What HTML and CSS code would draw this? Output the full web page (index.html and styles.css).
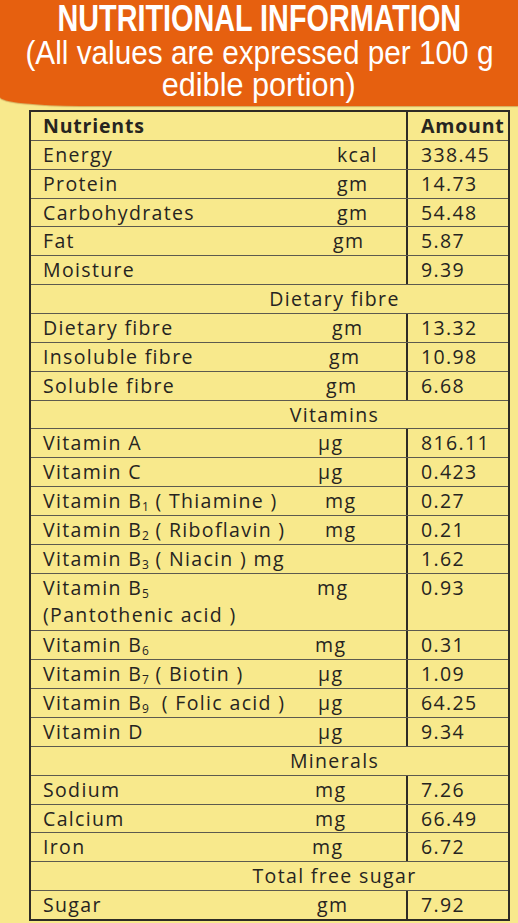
FILE: index.html
```html
<!DOCTYPE html>
<html>
<head>
<meta charset="utf-8">
<link rel="stylesheet" href="styles.css">
</head>
<body>
<header class="banner">
  <div class="line l1"><span>NUTRITIONAL INFORMATION</span></div>
  <div class="line l2"><span>(All values are expressed per 100 g</span></div>
  <div class="line l3"><span>edible portion)</span></div>
</header>
<main class="wrap">
  <div class="nt">
    <div class="row head"><div class="name b">Nutrients</div><div class="unit"></div><div class="amt b">Amount</div></div>
    <div class="row"><div class="name">Energy</div><div class="unit p23">kcal</div><div class="amt">338.45</div></div>
    <div class="row"><div class="name">Protein</div><div class="unit p23">gm</div><div class="amt">14.73</div></div>
    <div class="row"><div class="name">Carbohydrates</div><div class="unit p23">gm</div><div class="amt">54.48</div></div>
    <div class="row"><div class="name">Fat</div><div class="unit p19">gm</div><div class="amt">5.87</div></div>
    <div class="row"><div class="name">Moisture</div><div class="unit"></div><div class="amt">9.39</div></div>
    <div class="row sec"><div class="title">Dietary fibre</div></div>
    <div class="row"><div class="name">Dietary fibre</div><div class="unit p18">gm</div><div class="amt">13.32</div></div>
    <div class="row"><div class="name">Insoluble fibre</div><div class="unit p15">gm</div><div class="amt">10.98</div></div>
    <div class="row"><div class="name">Soluble fibre</div><div class="unit p12">gm</div><div class="amt">6.68</div></div>
    <div class="row sec"><div class="title">Vitamins</div></div>
    <div class="row"><div class="name">Vitamin A</div><div class="unit p4">µg</div><div class="amt">816.11</div></div>
    <div class="row"><div class="name">Vitamin C</div><div class="unit p4">µg</div><div class="amt">0.423</div></div>
    <div class="row"><div class="name">Vitamin B<sub>1</sub> ( Thiamine )</div><div class="unit p11">mg</div><div class="amt">0.27</div></div>
    <div class="row"><div class="name">Vitamin B<sub>2</sub> ( Riboflavin )</div><div class="unit p11">mg</div><div class="amt">0.21</div></div>
    <div class="row"><div class="name wide">Vitamin B<sub>3</sub> ( Niacin ) mg</div><div class="amt">1.62</div></div>
    <div class="row dbl"><div class="name">Vitamin B<sub>5</sub><br>(Pantothenic acid )</div><div class="unit p3">mg</div><div class="amt">0.93</div></div>
    <div class="row"><div class="name">Vitamin B<sub>6</sub></div><div class="unit p1">mg</div><div class="amt">0.31</div></div>
    <div class="row"><div class="name">Vitamin B<sub>7</sub> ( Biotin )</div><div class="unit p4">µg</div><div class="amt">1.09</div></div>
    <div class="row"><div class="name">Vitamin B<sub>9</sub> &nbsp;( Folic acid )</div><div class="unit p4">µg</div><div class="amt">64.25</div></div>
    <div class="row"><div class="name">Vitamin D</div><div class="unit p4">µg</div><div class="amt">9.34</div></div>
    <div class="row sec"><div class="title">Minerals</div></div>
    <div class="row"><div class="name">Sodium</div><div class="unit p1">mg</div><div class="amt">7.26</div></div>
    <div class="row"><div class="name">Calcium</div><div class="unit p1">mg</div><div class="amt">66.49</div></div>
    <div class="row"><div class="name">Iron</div><div class="unit">mg</div><div class="amt">6.72</div></div>
    <div class="row sec"><div class="title">Total free sugar</div></div>
    <div class="row"><div class="name">Sugar</div><div class="unit p3">gm</div><div class="amt">7.92</div></div>
  </div>
</main>
</body>
</html>
```

FILE: styles.css
```css
html, body {
  margin: 0;
  padding: 0;
  background: #f8e98c;
}

body {
  width: 518px;
  height: 923px;
  overflow: hidden;
}

.banner {
  background: #e6600f;
  color: #fff;
  font-family: "Liberation Sans", Arial, sans-serif;
  padding-top: 1px;
  height: 106px;
  box-sizing: border-box;
  border-bottom-left-radius: 80px 9px;
  box-shadow: 0 1px 1px rgba(150, 60, 0, 0.35);
}

.line {
  display: flex;
  justify-content: center;
  white-space: nowrap;
}

.line span {
  display: inline-block;
}

.l1 {
  font-weight: bold;
  font-size: 36px;
  line-height: 35px;
}

.l1 span {
  transform: scaleX(0.8);
}

.l2 {
  font-size: 34px;
  line-height: 33px;
}

.l2 span {
  transform: scaleX(0.875);
}

.l3 {
  font-size: 34px;
  line-height: 30px;
}

.l3 span {
  transform: scaleX(0.9);
}

.wrap {
  padding: 4px 0 0 29px;
}

.nt {
  width: 477px;
  border: 2px solid #2e2b25;
  font-family: "Open Sans", "DejaVu Sans", sans-serif;
  font-size: 19.5px;
  letter-spacing: 1.35px;
  color: #26241f;
}

.row {
  display: grid;
  grid-template-columns: 281px 94px 1fr;
  height: 28.86px;
  box-sizing: border-box;
  border-top: 1px solid #5d5a4e;
  line-height: 27px;
}

.row:first-child {
  border-top: none;
  height: 27.86px;
}

.row.dbl {
  height: 57.72px;
}

.name {
  padding-left: 12px;
  white-space: nowrap;
}

.name.wide {
  grid-column: 1 / 3;
}

.unit {
  white-space: nowrap;
}

.p1 { padding-left: 3px; }
.p3 { padding-left: 5px; }
.p4 { padding-left: 6px; }
.p11 { padding-left: 13px; }
.p12 { padding-left: 14px; }
.p15 { padding-left: 17px; }
.p18 { padding-left: 20px; }
.p19 { padding-left: 21px; }
.p23 { padding-left: 25px; }

.amt {
  border-left: 2px solid #2e2b25;
  padding-left: 13px;
  white-space: nowrap;
}

.b {
  font-weight: 700;
  letter-spacing: 0.8px;
}

.sec {
  display: block;
}

.title {
  text-align: center;
  padding-left: 130px;
}

sub {
  font-size: 12px;
  vertical-align: -3px;
  line-height: 0;
  letter-spacing: 0;
}
```
